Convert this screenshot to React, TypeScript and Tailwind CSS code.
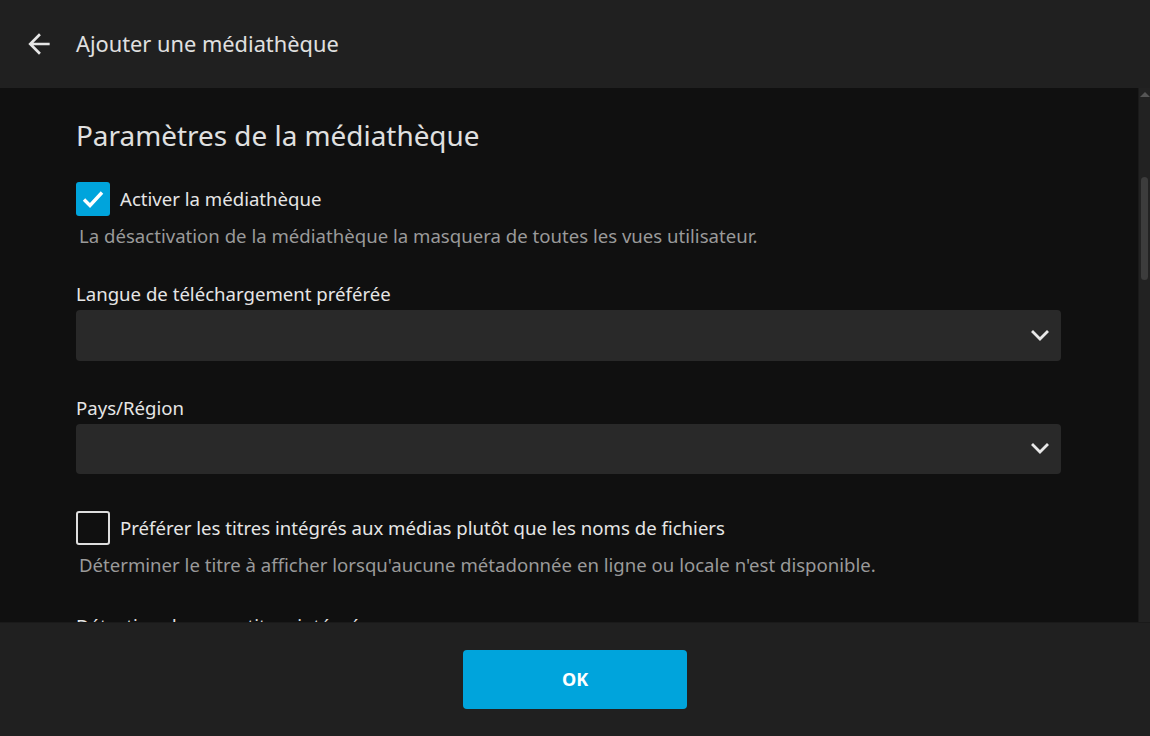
import React from 'react';

const font = { fontFamily: '"Noto Sans", "Open Sans", sans-serif' };

const Chevron: React.FC = () => (
  <svg width="18" height="12" viewBox="0 0 18 12" fill="none">
    <polyline points="2,2 9,9 16,2" stroke="#e8e8e8" strokeWidth="2.8" strokeLinecap="square" />
  </svg>
);

const SelectBox: React.FC<{ h: string }> = ({ h }) => (
  <div className={`mt-[3px] flex items-center justify-end rounded-[4px] bg-[#292929] pr-[12px] ${h}`}>
    <Chevron />
  </div>
);

const App: React.FC = () => {
  return (
    <div className="flex h-screen w-full flex-col bg-[#101010] text-[#dddddd]" style={font}>
      {/* header */}
      <div className="flex h-[88px] shrink-0 items-center bg-[#202020]">
        <button className="ml-[23px] flex h-[32px] w-[32px] items-center justify-center">
          <svg width="32" height="32" viewBox="0 0 24 24" fill="#e6e6e6">
            <path d="M20 11H7.83l5.59-5.59L12 4l-8 8 8 8 1.41-1.41L7.83 13H20v-2z" />
          </svg>
        </button>
        <h1 className="ml-[21px] text-[21.8px] leading-[30px] text-[#e0e0e0]">Ajouter une médiathèque</h1>
      </div>

      {/* content */}
      <div className="flex min-h-0 flex-1">
        <div className="flex-1 overflow-hidden px-[76px] pt-[30px]">
          <div className="w-[985px]">
            <h2 className="text-[27.9px] leading-[34px] text-[#e0e0e0]">Paramètres de la médiathèque</h2>

            <div className="mt-[30px] flex h-[34px] items-center">
              <div className="flex h-[34px] w-[34px] items-center justify-center rounded-[3px] bg-[#00a4dc]">
                <svg width="26" height="26" viewBox="0 0 26 26" fill="none">
                  <polyline points="4,13.5 10,19.5 22,6.5" stroke="#ffffff" strokeWidth="3.4" />
                </svg>
              </div>
              <span className="ml-[10px] text-[18.6px] leading-[26px] text-[#e6e6e6]">Activer la médiathèque</span>
            </div>
            <p className="ml-[3px] mt-[8px] text-[18.6px] leading-[24px] text-[#9a9a9a]">
              La désactivation de la médiathèque la masquera de toutes les vues utilisateur.
            </p>

            <label className="mt-[33px] block text-[18.6px] leading-[26px] text-[#e6e6e6]">Langue de téléchargement préférée</label>
            <SelectBox h="h-[51px]" />

            <label className="mt-[34px] block text-[18.6px] leading-[26px] text-[#e6e6e6]">Pays/Région</label>
            <SelectBox h="h-[50px]" />

            <div className="mt-[37px] flex h-[34px] items-center">
              <div className="h-[34px] w-[34px] rounded-[3px] border-2 border-[#dedede]" />
              <span className="ml-[10px] text-[18.6px] leading-[26px] text-[#e6e6e6]">
                Préférer les titres intégrés aux médias plutôt que les noms de fichiers
              </span>
            </div>
            <p className="ml-[3px] mt-[8px] text-[18.6px] leading-[24px] text-[#9a9a9a]">
              Déterminer le titre à afficher lorsqu'aucune métadonnée en ligne ou locale n'est disponible.
            </p>

            <label className="mt-[36px] block text-[18.6px] leading-[26px] text-[#e6e6e6]">Détection des sous-titres intégrés</label>
          </div>
        </div>

        {/* scrollbar */}
        <div className="relative w-[12px] shrink-0 border-l border-[#1a1a1a] bg-[#222222]">
          <div className="absolute left-[1px] top-[4px] h-0 w-0 border-x-[5px] border-b-[5px] border-x-transparent border-b-[#555555]" />
          <div className="absolute left-[2px] top-[89px] h-[103px] w-[7px] rounded-full bg-[#3c3c3c]" />
        </div>
      </div>

      {/* footer */}
      <div className="flex h-[114px] shrink-0 justify-center border-t border-[#1a1a1a] bg-[#202020] pt-[27px]">
        <button className="h-[59px] w-[224px] rounded-[4px] bg-[#00a4dc] text-[18px] font-bold text-white">OK</button>
      </div>
    </div>
  );
};

export default App;
